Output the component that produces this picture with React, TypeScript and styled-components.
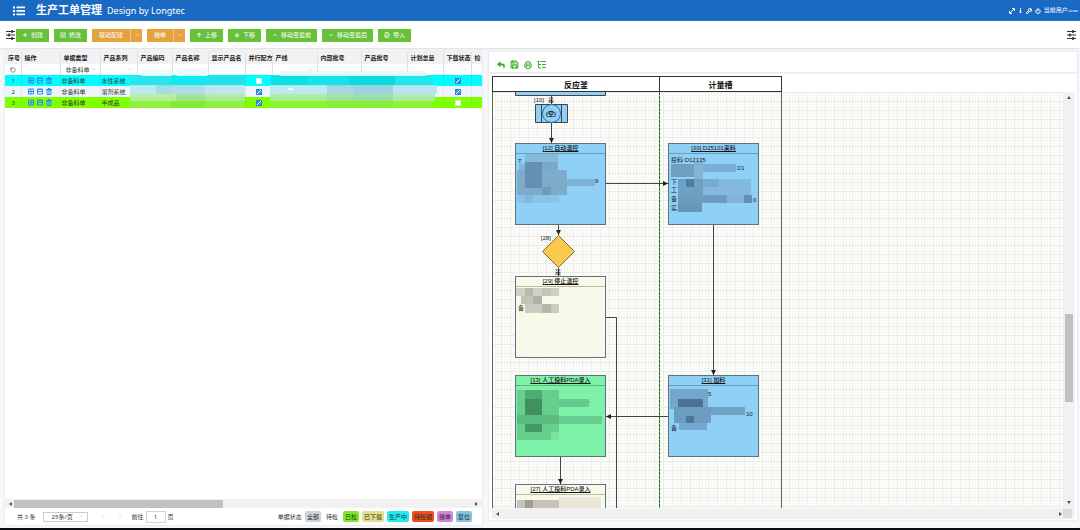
import React from 'react';
import styled, { createGlobalStyle, css } from 'styled-components';
import {
  ArrowDown, ArrowUp, ChevronDown, ChevronLeft, ChevronRight, ChevronUp,
  FileInput, KeyRound, Plus, Power, Printer, Save, SquarePen, RotateCcw,
} from 'lucide-react';
import { FaReply, FaInfo } from 'react-icons/fa';

const Global = createGlobalStyle`
  *, *::before, *::after { box-sizing: border-box; }
  html, body, #root { height: 100%; }
  body {
    margin: 0;
    overflow: hidden;
    background: #fff;
    color: #333;
    font-family: "Noto Sans", "Noto Sans CJK SC", sans-serif;
    font-size: 6px;
    line-height: 8px;
  }
  button, input, select { font: inherit; color: inherit; margin: 0; border-radius: 0; }
  svg { flex: none; display: block; }
`;

const Page = styled.div`
  display: flex;
  flex-direction: column;
  height: 100vh;
  background: #f7f8fa;
  border-bottom: 2px solid #0a0d10;
`;

const TopBar = styled.header`
  display: flex;
  align-items: center;
  flex: none;
  height: 21px;
  padding: 0 2px 0 13px;
  background: #1a69c3;
  color: #fff;
`;

const MenuButton = styled.button`
  display: flex;
  padding: 0;
  border: 0;
  background: none;
  color: #fff;
`;

const Title = styled.h1`
  display: flex;
  align-items: baseline;
  gap: 5px;
  margin: 0 auto 0 11px;
  font-size: 11px;
  line-height: 20px;
  font-weight: 700;
  white-space: nowrap;
`;

const Subtitle = styled.span`
  font-size: 9px;
  font-weight: 400;
`;

const UserTools = styled.div`
  display: flex;
  align-items: center;
  gap: 3px;
  white-space: nowrap;
`;

const UserName = styled.span`
  small { font-size: 4px; }
`;

const ActionBar = styled.div`
  display: flex;
  align-items: center;
  flex: none;
  gap: 5px;
  height: 27px;
  padding: 1px 4px 0 6px;
  background: #fff;
  box-shadow: 0 1px 2px #dcdee2;
`;

const Buttons = styled.div`
  display: flex;
  gap: 5px;
  flex: 1;
  margin-left: -4px;
`;

const Action = styled.button<{ $tone?: 'orange' }>`
  display: flex;
  align-items: center;
  gap: 3px;
  height: 13px;
  padding: 0 6px;
  border: 0;
  background: ${p => (p.$tone === 'orange' ? '#e6a23c' : '#67c23a')};
  color: #fff;
  white-space: nowrap;
`;

const Split = styled.div`
  display: flex;
  ${Action}:first-child { padding: 0 7px; }
  ${Action}:last-child { width: 12px; justify-content: center; padding: 0; border-left: 1px solid #efc583; }
`;

const Workspace = styled.main`
  display: grid;
  grid-template-columns: minmax(0, 477fr) minmax(0, 588fr);
  gap: 7px;
  flex: 1;
  min-height: 0;
  padding: 4px 3px 3px 5px;
`;

const ListPanel = styled.section`
  display: flex;
  flex-direction: column;
  min-height: 0;
  background: #fff;
  box-shadow: 0 0 2px #d5d7dc;
`;

const TableArea = styled.div`
  position: relative;
  flex: 1;
  min-height: 0;
  overflow: hidden;
`;

const Table = styled.table`
  width: 100%;
  table-layout: fixed;
  border-collapse: collapse;
  white-space: nowrap;
  th, td {
    height: 11px;
    padding: 0 0 0 1px;
    text-align: left;
    line-height: 8px;
  }
  thead th {
    height: 12px;
    padding: 0 0 0 3px;
    background: #f2f2f2;
    border-right: 1px solid #e2e2e2;
    color: #222;
    font-weight: 700;
  }
  thead td { padding: 0 1px; background: #fff; border: solid #dcdfe3; border-width: 0 1px 0 0; }
  td:first-child { text-align: center; }
  td:first-child svg { margin: 0 auto; }
`;

const DataRow = styled.tr<{ $bg: string }>`
  background: ${p => p.$bg};
  td { border-right: 1px solid #0000000c; }
`;

const FilterSelect = styled.select`
  appearance: none;
  display: block;
  width: 100%;
  height: 9px;
  padding: 0 9px 0 4px;
  border: 0;
  background: none;
  line-height: 8px;
`;

const FilterInput = styled.input`
  display: block;
  width: 100%;
  height: 9px;
  padding: 0 2px;
  border: 0;
  outline: 0;
  background: none;
`;

const SelectWrap = styled.span`
  display: grid;
  align-items: center;
  > * { grid-area: 1 / 1; }
  > svg { justify-self: end; margin-right: 3px; color: #a8abb2; pointer-events: none; }
`;

const RowTools = styled.span`
  display: flex;
  gap: 3px;
  padding-left: 5px;
`;

const RowTool = styled.button`
  padding: 0;
  border: 0;
  background: none;
  color: #2f8af0;
`;

const Check = styled.input.attrs({ type: 'checkbox' })`
  appearance: none;
  display: block;
  width: 6px;
  height: 6px;
  margin: 0 auto;
  background: #fff;
  border: 1px solid #d9e4ec;
  &:checked {
    border-color: #3080dc;
    background: linear-gradient(135deg, #3a8ce8 45%, #fff 45% 60%, #3a8ce8 60%);
  }
`;

const Redaction = styled.svg`
  position: absolute;
  left: 0;
  top: 0;
`;

const track = css`
  display: flex;
  align-items: center;
  flex: none;
  background: #f1f1f1;
`;
const HTrack = styled.div<{ $h: number }>`
  ${track}
  height: ${p => p.$h}px;
  padding: 0 3px;
`;
const VTrack = styled.div`
  ${track}
  flex-direction: column;
  width: 12px;
  padding: 3px 0;
`;
const Thumb = styled.div<{ $grow: number; $vertical?: boolean }>`
  flex: ${p => p.$grow} 1 0;
  ${p => (p.$vertical ? 'width: 8px;' : 'height: 8px;')}
  background: #c1c1c1;
`;
const Gap = styled.div<{ $grow: number }>`
  flex: ${p => p.$grow} 1 0;
`;
const Corner = styled.div`
  width: 9px;
  height: 9px;
  background: #dcdcdc;
`;

const Footer = styled.footer`
  display: flex;
  align-items: center;
  flex: none;
  height: 17px;
  padding: 0 10px 0 12px;
  white-space: nowrap;
`;

const PageSize = styled(SelectWrap)`
  width: 45px;
  height: 10px;
  margin: 0 7px;
  border: 1px solid #c9ccd2;
  ${FilterSelect} { padding-left: 8px; height: 8px; }
`;

const PageArrow = styled.button`
  display: flex;
  justify-content: center;
  width: 17px;
  padding: 0;
  border: 0;
  background: none;
  color: #b4b8be;
`;

const Goto = styled.label`
  display: flex;
  align-items: center;
  gap: 2px;
  margin: 0 auto 0 3px;
  input {
    width: 20px;
    height: 12px;
    padding: 0;
    border: 1px solid #d0d3d9;
    text-align: center;
    background: #fff;
  }
`;

const Statuses = styled.div`
  display: flex;
  align-items: center;
  gap: 3px;
`;

const Status = styled.button<{ $bg: string }>`
  height: 11px;
  padding: 0 2px;
  border: 0;
  border-radius: 2px;
  background: ${p => p.$bg};
  color: #2a2a2a;
`;

const FlowPanel = styled.section`
  display: flex;
  flex-direction: column;
  min-height: 0;
  margin-bottom: 5px;
  padding: 0 2px 1px 3px;
  background: #fff;
  box-shadow: 0 0 2px #d5d7dc;
`;

const FlowTools = styled.div`
  display: flex;
  align-items: center;
  gap: 5px;
  flex: none;
  height: 20px;
  margin: 0 -2px 4px -3px;
  padding: 5px 0 0 8px;
  box-shadow: 0 1px 2px #dcdee2;
`;

const FlowTool = styled.button`
  padding: 0;
  border: 0;
  background: none;
  color: #3fae2a;
`;

const Lanes = styled.div`
  display: flex;
  flex: none;
  height: 16px;
  border-left: 1px solid #333;
`;

const Lane = styled.h2<{ $w: number }>`
  width: ${p => p.$w}px;
  margin: 0;
  border: solid #333;
  border-width: 1px 1px 1px 0;
  color: #111;
  font-size: 8px;
  line-height: 16px;
  text-align: center;
`;

const FlowBody = styled.div`
  display: flex;
  flex: 1;
  min-height: 0;
`;

const Canvas = styled.div`
  position: relative;
  flex: 1;
  overflow: hidden;
  font-family: "Liberation Sans", "Noto Sans CJK SC", sans-serif;
  background-color: #fdfdfb;
  background-image:
    linear-gradient(#ebebe7 1px, transparent 1px),
    linear-gradient(90deg, #eeeeea 1px, transparent 1px),
    linear-gradient(#f7f7f4 1px, transparent 1px),
    linear-gradient(90deg, #f7f7f4 1px, transparent 1px);
  background-size: 9px 9px, 9px 9px, 3px 3px, 3px 3px;
`;

const Wires = styled.svg`
  position: absolute;
  inset: 0;
  width: 100%;
  height: 100%;
`;

const NodeBox = styled.article<{ $x: number; $y: number; $bg: string }>`
  position: absolute;
  left: ${p => p.$x}px;
  top: ${p => p.$y}px;
  width: 91px;
  height: 82px;
  border: 1px solid #5c727f;
  background: ${p => p.$bg};
`;

const NodeTitle = styled.h3`
  height: 10px;
  margin: 0;
  border-bottom: 1px solid #00000040;
  color: #111;
  font-size: 6px;
  line-height: 9px;
  font-weight: 500;
  text-align: center;
  text-decoration: underline;
  white-space: nowrap;
`;

type Patch = [number, number, number, number, string];
type Note = [number, number, string];
interface FlowNode { id: string; title: string; x: number; y: number; bg: string; patches: Patch[]; notes: Note[] }

const BLUE = '#8fd0f7';
const CREAM = '#f8f9e8';

const nodes: FlowNode[] = [
  {
    id: '12', title: '自动温控', x: 23, y: 51, bg: BLUE,
    patches: [
      [9, 10, 33, 16, '#86b8da'], [1, 26, 50, 25, '#7eabca'], [3, 20, 6, 6, '#83b5d7'], [9, 18, 17, 26, '#6390b3'],
      [26, 18, 16, 8, '#7aa8c8'], [26, 43, 9, 8, '#6f9cbd'], [51, 35, 28, 7, '#7db2d5'],
      [1, 51, 42, 8, '#8ac3ea'], [9, 51, 8, 8, '#82b8dd'],
    ],
    notes: [[3, 19, 'T'], [80, 39, '9']],
  },
  {
    id: '30', title: 'D25101来料', x: 176, y: 51, bg: BLUE,
    patches: [
      [2, 20, 32, 13, '#6f9fc3'], [34, 20, 33, 8, '#79aed5'], [25, 18, 9, 17, '#83b3d5'], [9, 35, 25, 16, '#709fc1'],
      [17, 35, 8, 8, '#4c7ea6'], [34, 35, 48, 16, '#84badf'], [34, 35, 16, 8, '#78abd0'], [9, 51, 49, 8, '#6d9dbe'],
      [58, 51, 17, 8, '#80b5d9'], [75, 51, 8, 8, '#5f90b5'], [9, 59, 24, 9, '#6696b8'],
    ],
    notes: [[3, 18, '投料:D12135'], [69, 26, 'D1'], [3, 40, '下'], [3, 48, '工'], [3, 57, '备'], [85, 58, '0'], [3, 66, '实']],
  },
  {
    id: '29', title: '停止温控', x: 23, y: 184, bg: CREAM,
    patches: [
      [0, 11, 43, 8, '#d0d0c6'], [9, 11, 8, 8, '#b9b9b0'], [26, 11, 9, 8, '#c3c3b9'], [5, 19, 21, 8, '#c2c2b9'],
      [17, 19, 9, 8, '#b0b0a7'], [9, 27, 34, 9, '#cbcbc1'], [26, 27, 9, 9, '#b6b6ac'],
    ],
    notes: [[3, 33, '备']],
  },
  {
    id: '13', title: '人工投料PDA录入', x: 23, y: 283, bg: '#7ef2a8',
    patches: [
      [1, 14, 42, 50, '#66cf8d'], [9, 14, 17, 9, '#51aa73'], [9, 23, 17, 16, '#3f915e'], [1, 39, 42, 9, '#59bb7e'],
      [9, 48, 17, 8, '#439a65'], [43, 23, 30, 8, '#65cb8c'], [43, 40, 43, 8, '#69cf90'], [35, 56, 8, 8, '#76e5a0'],
    ],
    notes: [[74, 26, ',']],
  },
  {
    id: '31', title: '加料', x: 176, y: 283, bg: BLUE,
    patches: [
      [1, 13, 38, 20, '#75a5c8'], [9, 23, 25, 8, '#4a7292'], [5, 31, 37, 16, '#6c9cbf'], [42, 31, 34, 8, '#6fa1c5'],
      [17, 40, 8, 8, '#4d7998'], [10, 47, 28, 7, '#74a8cd'],
    ],
    notes: [[40, 20, '5'], [78, 40, '10'], [3, 54, '备']],
  },
  {
    id: '27', title: '人工投料PDA录入', x: 23, y: 392, bg: CREAM,
    patches: [[1, 15, 42, 9, '#c6c4ba'], [9, 15, 8, 9, '#9d9b92'], [43, 12, 42, 12, '#ebe7d8']],
    notes: [],
  },
];

const columns: { label: string; width: number; filter?: 'select' | 'input' | 'type' }[] = [
  { label: '序号', width: 16 }, { label: '操作', width: 39 },
  { label: '单据类型', width: 40, filter: 'type' }, { label: '产品系列', width: 37, filter: 'select' },
  { label: '产品编码', width: 35, filter: 'input' }, { label: '产品名称', width: 36, filter: 'input' },
  { label: '显示产品名', width: 37 }, { label: '并行配方', width: 27 },
  { label: '产线', width: 45, filter: 'select' }, { label: '内部批号', width: 44, filter: 'input' },
  { label: '产品批号', width: 46 }, { label: '计划总量', width: 36 },
  { label: '下载状态', width: 28, filter: 'select' }, { label: '检', width: 11 },
];

const rows = [
  { type: '非备料单', series: '水性系统', bg: '#00fdff', parallel: false, loaded: true },
  { type: '非备料单', series: '溶剂系统', bg: '#eef4fb', parallel: true, loaded: true },
  { type: '非备料单', series: '半成品', bg: '#80ff00', parallel: true, loaded: false },
];

const statuses = [
  ['全部', '#cfd3d8'], ['待检', '#ffffff'], ['已检', '#7fe825'], ['已下载', '#e3dd8e'],
  ['生产中', '#1feef0'], ['待检锁', '#ee4d1c'], ['撤单', '#d583dc'], ['复位', '#84c5dc'],
];

const tablePatches: Patch[] = [
  [137, 18, 30, 6, '#edf9fa'], [172, 17, 30, 7, '#e8f8f9'], [275, 19, 146, 5, '#e6f6f8'],
  [125, 24, 40, 9, '#2fe3e8'], [165, 24, 35, 9, '#10e9ec'], [200, 24, 40, 9, '#27dfe6'],
  [266, 24, 36, 9, '#0cdce4'], [302, 24, 42, 9, '#17e1e8'], [344, 24, 46, 9, '#0fd6de'], [390, 24, 38, 9, '#22e5ea'],
  [125, 33, 26, 9, '#b5e9ee'], [151, 33, 14, 9, '#9adbe4'], [165, 33, 35, 9, '#a6dbe6'], [200, 33, 40, 9, '#b8e5ef'],
  [265, 33, 57, 9, '#b6e7f0'], [322, 33, 26, 9, '#9fd5e0'], [348, 33, 40, 9, '#94d0dc'], [388, 33, 44, 9, '#b2e3ec'],
  [125, 42, 46, 7, '#b7eda5'], [171, 42, 29, 7, '#9fe093'], [200, 42, 40, 7, '#b0e8a4'],
  [265, 42, 57, 7, '#aeeaa0'], [322, 42, 26, 7, '#a2dfa6'], [348, 42, 40, 7, '#9adcae'], [388, 42, 42, 7, '#b2e7b5'],
  [125, 49, 40, 7, '#93f04a'], [165, 49, 35, 7, '#83ea38'], [200, 49, 40, 7, '#91ef47'],
  [265, 49, 57, 7, '#8df53a'], [322, 49, 66, 7, '#88ee3c'], [388, 49, 38, 7, '#8df53a'],
];

const Patches = ({ items }: { items: Patch[] }) => (
  <>{items.map(([x, y, w, h, fill], i) => <rect key={i} x={x} y={y} width={w} height={h} fill={fill} />)}</>
);

const Arrow = ({ dir }: { dir: 'l' | 'r' | 'u' | 'd' }) => {
  const d = { l: 'M4 1v4L1 3z', r: 'M2 1v4l3-2z', u: 'M1 4h4L3 1z', d: 'M1 2h4L3 5z' }[dir];
  return <svg width="6" height="6"><path d={d} fill="#555" /></svg>;
};

const Sliders = () => (
  <svg width="9" height="10" viewBox="0 0 9 10" stroke="#333" strokeWidth="1" fill="none">
    <path d="M0 1.5h9M0 5h9M0 8.5h9" />
    <path d="M6 0v3M3 3.5v3M6 7v3" strokeWidth="1.6" />
  </svg>
);

const ListIcon = () => (
  <svg width="12" height="10" viewBox="0 0 12 10" fill="#fff">
    <path d="M0 .5h2v2H0zM0 4h2v2H0zM0 7.500h2v2H0zM3.500 .5H12v1.800H3.500zM3.500 4H12v1.800H3.500zM3.500 7.500H12v1.800H3.500z" />
  </svg>
);

const GridIcon = ({ kind }: { kind: number }) => (
  <svg width="6" height="7" viewBox="0 0 6 7" fill="none" stroke="currentColor">
    {kind === 0 && <path d="M.5 1h5v5h-5zM0 3.500h6M3 1v5" />}
    {kind === 1 && <path d="M.5 1h5v5h-5zM0 1.500h6M1 3.500h4" />}
    {kind === 2 && <path d="M1 2h4v4.500H1zM0 1.500h6M2 0.500h2M3 2v4" />}
  </svg>
);

const Filter = ({ label, kind }: { label: string; kind?: string }) => {
  if (kind === 'input') return <FilterInput aria-label={label} />;
  if (kind) {
    return (
      <SelectWrap>
        <FilterSelect aria-label={label}><option>{kind === 'type' ? '非备料单' : ''}</option></FilterSelect>
        <ChevronDown size={5} />
      </SelectWrap>
    );
  }
  return null;
};

const OrderTable = () => (
  <Table>
    <colgroup>{columns.map(c => <col key={c.label} style={{ width: c.width }} />)}</colgroup>
    <thead>
      <tr>{columns.map(c => <th key={c.label}>{c.label}</th>)}</tr>
      <tr>
        {columns.map((c, i) => (
          <td key={c.label}>
            {i === 0 ? <RotateCcw size={6} /> : <Filter label={c.label} kind={c.filter} />}
          </td>
        ))}
      </tr>
    </thead>
    <tbody>
      {rows.map((r, i) => (
        <DataRow key={i} $bg={r.bg}>
          <td>{i + 1}</td>
          <td>
            <RowTools>
              {['查看', '明细', '删除'].map((name, k) => (
                <RowTool key={name} aria-label={name}><GridIcon kind={k} /></RowTool>
              ))}
            </RowTools>
          </td>
          <td>{r.type}</td>
          <td>{r.series}</td>
          <td /><td /><td />
          <td><Check aria-label="并行配方" defaultChecked={r.parallel} /></td>
          <td /><td /><td /><td />
          <td><Check aria-label="下载状态" defaultChecked={r.loaded} /></td>
          <td />
        </DataRow>
      ))}
    </tbody>
  </Table>
);

const Flow = () => (
  <Canvas>
    <Wires fill="none" stroke="#444" fontSize="6">
      <defs>
        <marker id="tip" viewBox="0 0 6 6" refX="6" refY="3" markerWidth="5" markerHeight="5" orient="auto" markerUnits="userSpaceOnUse">
          <path d="M0 0l6 3-6 3z" fill="#222" stroke="none" />
        </marker>
      </defs>
      <path d="M.5 0v900M289.500 0v900" stroke="#5b6b5b" />
      <path d="M167.500 0v900" stroke="#7cc47f" />
      <path d="M167.500 0v900" stroke="#1f6b26" strokeDasharray="3 1" />
      <path d="M23.500-5h90v8.500h-90z" fill={BLUE} />
      <path d="M59.500 3v9" />
      <path d="M43.500 12.500h32v18h-32zM49.500 12.500v18M69.500 12.500v18" fill={BLUE} />
      <circle cx="59.500" cy="21.500" r="9" fill={BLUE} stroke="#2d6c9b" />
      <path d="M59.500 31v20" markerEnd="url(#tip)" />
      <path d="M66.500 133v10" markerEnd="url(#tip)" />
      <path d="M66.500 176v8" />
      <path d="M66.500 143.500l16 16-16 16-16-16z" fill="#fcc94f" stroke="#7b6a3c" />
      <path d="M114 91.500h62" markerEnd="url(#tip)" />
      <path d="M221.500 133v150" markerEnd="url(#tip)" />
      <path d="M114 225.500h10.500v700" />
      <path d="M176 324.500h-62" markerEnd="url(#tip)" />
      <path d="M68.500 365v27" markerEnd="url(#tip)" />
      <g fill="#222" stroke="none">
        <text x="42" y="10">[10]</text>
        <text x="56" y="10">是</text>
        <text x="59" y="24" textAnchor="middle" fontWeight="700">(空)</text>
        <text x="49" y="148">[28]</text>
        <text x="63" y="182">是</text>
      </g>
    </Wires>
    {nodes.map(n => (
      <NodeBox key={n.id} $x={n.x} $y={n.y} $bg={n.bg}>
        <NodeTitle>[{n.id}] {n.title}</NodeTitle>
        <Redaction width="89" height="80">
          <g fontSize="6" fill="#222">
            {n.notes.map(([x, y, t]) => <text key={t + y} x={x - 1} y={y}>{t}</text>)}
          </g>
          <Patches items={n.patches} />
        </Redaction>
      </NodeBox>
    ))}
  </Canvas>
);

export default function App() {
  return (
    <>
      <Global />
      <Page>
        <TopBar>
          <MenuButton aria-label="菜单"><ListIcon /></MenuButton>
          <Title>生产工单管理 <Subtitle>Design by Longtec</Subtitle></Title>
          <UserTools>
            <svg width="6" height="6" viewBox="0 0 6 6" fill="none" stroke="#fff"><path d="M1 5l4-4M3 .5h2.500V3M.5 3v2.500H3" /></svg>
            <FaInfo size={5} />
            <KeyRound size={6} strokeWidth={4} />
            <Power size={6} strokeWidth={4} />
            <UserName>当前用户<small>:zcxw</small></UserName>
          </UserTools>
        </TopBar>
        <ActionBar>
          <Sliders />
          <Buttons>
            <Action><Plus size={6} strokeWidth={3} />创建</Action>
            <Action><SquarePen size={6} strokeWidth={3} />修改</Action>
            <Split>
              <Action $tone="orange">驱动配建</Action>
              <Action $tone="orange" aria-label="更多"><ChevronDown size={6} /></Action>
            </Split>
            <Split>
              <Action $tone="orange">撤单</Action>
              <Action $tone="orange" aria-label="更多"><ChevronDown size={6} /></Action>
            </Split>
            <Action><ArrowUp size={6} strokeWidth={4} />上移</Action>
            <Action><ArrowDown size={6} strokeWidth={4} />下移</Action>
            <Action><ChevronUp size={6} strokeWidth={3} />移动至最前</Action>
            <Action><ChevronDown size={6} strokeWidth={3} />移动至最后</Action>
            <Action><FileInput size={6} strokeWidth={3} />导入</Action>
          </Buttons>
          <Sliders />
        </ActionBar>
        <Workspace>
          <ListPanel>
            <TableArea>
              <OrderTable />
              <Redaction width="440" height="60" opacity="0.9">
                <Patches items={tablePatches} />
                <path d="M282 38l3-3 4 3z" fill="#fff" />
              </Redaction>
            </TableArea>
            <HTrack $h={9}>
              <Arrow dir="l" />
              <Thumb $grow={209} />
              <Gap $grow={249} />
              <Arrow dir="r" />
            </HTrack>
            <Footer>
              共 3 条
              <PageSize>
                <FilterSelect aria-label="每页条数"><option>25条/页</option></FilterSelect>
                <ChevronDown size={5} />
              </PageSize>
              <PageArrow aria-label="上一页"><ChevronLeft size={6} /></PageArrow>
              <PageArrow aria-label="下一页"><ChevronRight size={6} /></PageArrow>
              <Goto>前往 <input defaultValue="1" /> 页</Goto>
              <Statuses>
                单据状态
                {statuses.map(([name, bg]) => <Status key={name} $bg={bg}>{name}</Status>)}
              </Statuses>
            </Footer>
          </ListPanel>
          <FlowPanel>
            <FlowTools>
              <FlowTool aria-label="撤销"><FaReply size={8} /></FlowTool>
              <FlowTool aria-label="保存"><Save size={9} strokeWidth={3} /></FlowTool>
              <FlowTool aria-label="打印"><Printer size={8} strokeWidth={3} /></FlowTool>
              <FlowTool aria-label="结构">
                <svg width="9" height="9" viewBox="0 0 9 9" fill="none" stroke="currentColor"><path d="M0 1.500h2M3 1.500h6M1.500 1v7H4M1.500 4.500H4M5 4.500h4M5 7.500h4" /></svg>
              </FlowTool>
            </FlowTools>
            <Lanes>
              <Lane $w={167}>反应釜</Lane>
              <Lane $w={122}>计量槽</Lane>
            </Lanes>
            <FlowBody>
              <Flow />
              <VTrack>
                <Arrow dir="u" />
                <Gap $grow={211} />
                <Thumb $grow={88} $vertical />
                <Gap $grow={96} />
                <Arrow dir="d" />
              </VTrack>
            </FlowBody>
            <HTrack $h={11}>
              <Arrow dir="l" />
              <Gap $grow={1} />
              <Arrow dir="r" />
              <Corner />
            </HTrack>
          </FlowPanel>
        </Workspace>
      </Page>
    </>
  );
}
